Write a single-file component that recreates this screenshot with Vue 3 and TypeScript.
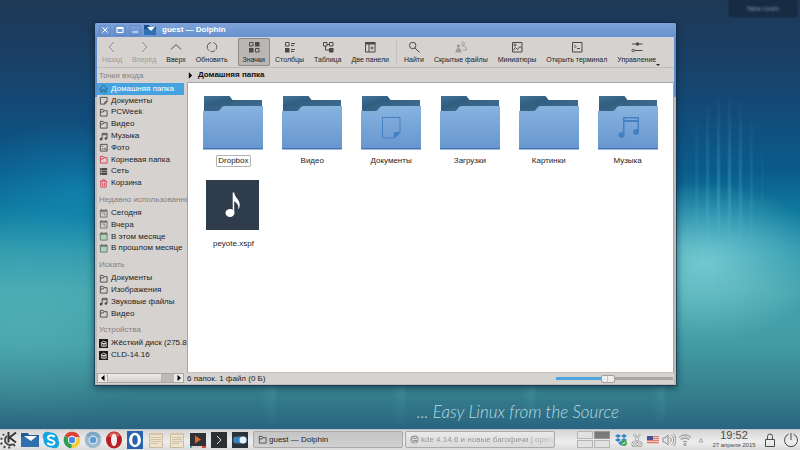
<script setup lang="ts">
import { ref } from 'vue'

interface Shape { d: string; f?: string; s?: string; w?: number; o?: number }

const ink = '#4a4a4a'
const line = (d: string, s = ink, w = 1): Shape => ({ d, s, w })
const fill = (d: string, f = ink, o = 1): Shape => ({ d, f, o })
const disc = (x: number, y: number, r: number) =>
  `M${x - r} ${y}a${r} ${r} 0 1 0 ${2 * r} 0a${r} ${r} 0 1 0 ${-2 * r} 0z`

/* Toolbar glyphs, 12 x 12 */
const tools: Record<string, Shape[]> = {
  back: [line('M8 1L3 6l5 5', '#8f8d8c')],
  forward: [line('M4 1l5 5-5 5', '#8f8d8c')],
  up: [line('M1 8.500l5-5 5 5')],
  reload: [line('M3 9.700A4.700 4.700 0 0 1 5 1.400M7.500 1.500A4.700 4.700 0 0 1 10 8.500M9 9.600A4.700 4.700 0 0 1 4.500 10.500', '#5c5c5c')],
  icons: [line('M1.500 1.500h3.500v3.500H1.500zM7.500 7.500H11V11H7.500z'), fill('M7 1h4.500v4.500H7zM1 7h4.500v4.500H1z')],
  columns: [line('M1.500 1.500h3.500v3.500H1.500zM7 2.500h4M7 4.500h3M7 8.500h4M7 10.500h3'), fill('M1 7h4.500v4.500H1z')],
  table: [line('M1.500 1.500h3.500v3.500H1.500zM7.500 1.500H11v3.500H7.500zM5 3.500h2.500M3.500 5v4H7'), fill('M7 7h4.500v4.500H7z')],
  split: [line('M1.500 2v9h9.500v-9zM5 3v8M6.500 7h3M8 5.500v3'), fill('M1 1h10.500v2.500H1z')],
  find: [line('M1.500 4.500a3.200 3.200 0 1 0 6.400 0a3.200 3.200 0 1 0-6.400 0M7 7l4.500 4.500')],
  hidden: [
    line('M6.500 2.500a1.500 1.500 0 1 1 3 0a1.500 1.500 0 1 1-3 0M7 5.500c2.500-1.500 4.500.5 4.500 3.500H8', '#a09d9b'),
    fill(disc(3.5, 5, 1.7) + 'M.5 11.500c0-6 6-6 6 0z', '#a09d9b'),
  ],
  preview: [line('M1.500 1.500h9.500V11H1.500zM2 9.500l2.500-3 2 2L9 5.500l2 2M3 4a1 1 0 1 0 2 0a1 1 0 1 0-2 0')],
  terminal: [line('M1.500 1.500h9.500V11H1.500zM3.500 4l1.500 1.500L3.500 7M6 7.500h3')],
  control: [line('M1 3h10.500M4 9.500h7.500M1 9.500a1.200 1.200 0 1 0 2.500 0a1.200 1.200 0 1 0-2.500 0'), fill(disc(6.5, 3, 1.8))],
}

/* Places glyphs, 10 x 10 */
const folder = (c = ink) => [line('M1.500 9V1.500h3l1 1.500h3.500v6zM1.500 4.500h3l1-1.500', c)]
const calendar = (c: string) => [
  fill('M1.500 3h7v6h-7z', c), line('M1.500 1.500h7.500V9H1.500zM3 0v2M7.500 0v2', '#70706e'), fill('M1 1h8v2H1z', '#70706e'),
]
const places: Record<string, Shape[]> = {
  home: [line('M.5 5.500L5 1l4.500 4.500M2 4.500V9h2V6.500h2V9h2V4.500', '#2b668b')],
  doc: [line('M1.500 1.500h7.500v5L6.500 9h-5zM9 6.500H6.500V9')],
  folder: folder(),
  root: folder('#dc3a55'),
  music: [line('M3.500 8V1.500H9V7M3.500 3H9'), fill(disc(2.3, 8, 1.5) + disc(7.7, 7.2, 1.5))],
  photo: [line('M1.500 1.500H9V9H1.500zM3 7.500l1.500-1.500 1 1 1.500-1 1.500 2M3 3.500h1.500')],
  net: [fill('M1 1h8v2.200H1zM1 3.900h8v2.200H1zM1 6.800h8V9H1z'), line('M2 2h1M2 5h1M2 8h1', '#bbb')],
  trash: [line('M1 2.500h8M3.500 2.500v-1.500h3v1.500M2 2.500V9h6V2.500M4 4.500v3M6 4.500v3', '#dc3a55')],
  day: [...calendar('#cfcdcb'), line('M3.500 4.500h3v3', '#8a8a88')],
  month: calendar('#a5d6b5'),
  disk: [fill('M0 0h10v10H0z', '#1d1d1d'), line('M2 4.500l3-2 3.500 1.500M3 5h5v3H3zM4.500 6.500h2', '#e8e8e8')],
}

const toolbar = [
  { icon: 'back', label: 'Назад', off: true }, { icon: 'forward', label: 'Вперёд', off: true },
  { icon: 'up', label: 'Вверх' }, { icon: 'reload', label: 'Обновить' },
  { icon: 'icons', label: 'Значки', sep: true, mode: true }, { icon: 'columns', label: 'Столбцы', mode: true },
  { icon: 'table', label: 'Таблица', mode: true }, { icon: 'split', label: 'Две панели' },
  { icon: 'find', label: 'Найти', sep: true }, { icon: 'hidden', label: 'Скрытые файлы' },
  { icon: 'preview', label: 'Миниатюры' }, { icon: 'terminal', label: 'Открыть терминал' },
  { icon: 'control', label: 'Управление', menu: true },
]
const mode = ref('icons')

const sections = [
  { title: 'Точки входа', items: [['home', 'Домашняя папка'], ['doc', 'Документы'], ['folder', 'PCWeek'], ['folder', 'Видео'], ['music', 'Музыка'], ['photo', 'Фото'], ['root', 'Корневая папка'], ['net', 'Сеть'], ['trash', 'Корзина']] },
  { title: 'Недавно использованны', items: [['day', 'Сегодня'], ['day', 'Вчера'], ['month', 'В этом месяце'], ['month', 'В прошлом месяце']] },
  { title: 'Искать', items: [['folder', 'Документы'], ['folder', 'Изображения'], ['music', 'Звуковые файлы'], ['folder', 'Видео']] },
  { title: 'Устройства', items: [['disk', 'Жёсткий диск (275.8'], ['disk', 'CLD-14.16']] },
]

const files = [
  { name: 'Dropbox', kind: 'plain', focus: true }, { name: 'Видео', kind: 'plain' }, { name: 'Документы', kind: 'doc' },
  { name: 'Загрузки', kind: 'plain' }, { name: 'Картинки', kind: 'plain' }, { name: 'Музыка', kind: 'music' },
  { name: 'peyote.xspf', kind: 'audio' },
]

/* Panel launchers, 18 x 18 */
const note = [
  fill('M2 2h14v15H2z', '#ede3cc'), line('M2.500 2.500h13v14h-13z', '#c9bb9d'),
  line('M4 6.500h10M4 8.500h10M4 10.500h10M4 12.500h7', '#cfc2a6'), fill('M2 2h14v2H2z', '#d3c6aa'),
]
const launchers: { name: string; shapes: Shape[] }[] = [
  { name: 'Меню', shapes: [
    line('M7 5a5 5 0 1 0 6 8M4 4.500L3 3M2.500 8L.5 7.500M2.500 12l-2 1M5 15l-1 2M9 15.500l.5 2M13 13l2 2', '#4a4c4e', 2),
    line('M8.500 1v10.500M16 1.500L9.500 6.500l6.500 5', '#35373a', 2)] },
  { name: 'Dolphin', shapes: [fill('M0 2h7l1 2h10v12H0z', '#235a92'), fill('M0 6h18v10H0z', '#2f6fae'), fill('M3 5h13l-6 5z', '#fff')] },
  { name: 'Skype', shapes: [
    fill(disc(9, 9, 7.5) + disc(5.5, 5.5, 4.8) + disc(12.5, 12.5, 4.8), '#13a6e3'),
    line('M12.500 6.200C11.500 3.800 6 4 6 6.700S12.500 8.800 12.500 11.600 6.500 14.200 5.500 11.600', '#fff', 2)] },
  { name: 'Chrome', shapes: [
    fill('M9 9L1.800 4.800A8.300 8.300 0 0 1 16.800 6.200H9z', '#dc4437'), fill('M9 9l7.800-2.800A8.300 8.300 0 0 1 8.500 17.300z', '#f7cb3a'),
    fill('M9 9l-.5 8.300A8.300 8.300 0 0 1 1.800 4.800z', '#2d9d57'), fill(disc(9, 9, 4.2), '#fff'), fill(disc(9, 9, 3.2), '#4788e8')] },
  { name: 'Chromium', shapes: [
    fill(disc(9, 9, 8.3), '#9bbad0'), fill('M9 9L1.800 4.800A8.300 8.300 0 0 1 16.800 6.200H9z', '#7fa6c2'),
    fill(disc(9, 9, 4.4), '#dcebf4'), fill(disc(9, 9, 3.2), '#5e9cc9')] },
  { name: 'Opera', shapes: [
    { d: 'M9 .5a8 8.500 0 1 0 0 17a8 8.500 0 1 0 0-17z', f: '#bd1c20' }, { d: 'M5 2.500C9 0 14 2 15 5C10 6 5 5 3 6z', f: '#dc5b56' },
    { d: 'M9 2.800a3 6.200 0 1 0 0 12.400a3 6.200 0 1 0 0-12.400z', f: '#f3eeee' }] },
  { name: 'Opera Developer', shapes: [
    fill('M1 0h16v18H1z', '#2a63ad'), { d: 'M9 1.800a6 7.200 0 1 0 0 14.400a6 7.200 0 1 0 0-14.400z', f: '#fff' },
    { d: 'M9 4.300a2.700 4.700 0 1 0 0 9.400a2.700 4.700 0 1 0 0-9.400z', f: '#2a63ad' }] },
  { name: 'Заметка', shapes: note },
  { name: 'Текст', shapes: note },
  { name: 'Плеер', shapes: [fill('M1 2h16v13H1z', '#303236'), fill('M6 4.500l6 4-6 4z', '#e2672f'), fill('M1 15h16v2H1z', '#d8d2cd'), fill('M1 15h2v2H1z', '#35a7b8'), fill('M13 15h4v2h-4z', '#d64a40')] },
  { name: 'Терминал', shapes: [fill('M1 1h16v16H1z', '#2d3033'), line('M7 5l4 4-4 4', '#dedede', 1)] },
  { name: 'Настройки', shapes: [fill('M1 1h16v16H1z', '#2b3238'), fill('M5.500 5.500h7a3.500 3.500 0 0 1 0 7h-7a3.500 3.500 0 0 1 0-7z', '#3a7fc0'), fill(disc(12, 9, 3.5), '#e6f1f8')] },
]

/* System tray glyphs, 14 x 14 */
const gray = '#8b8b8b'
const tray: { name: string; shapes: Shape[] }[] = [
  { name: 'Dropbox', shapes: [
    fill('M4 1l3 2-3 2-3-2zM10 1l3 2-3 2-3-2zM4 5l3 2-3 2-3-2zM10 5l3 2-3 2-3-2zM7 8l3 2-3 2.500L4 10z', '#2f87c5'), fill(disc(10, 10, 3), '#45a556'), line('M8.500 10l1 1 2-2', '#fff')] },
  { name: 'Буфер обмена', shapes: [
    line('M4 1l5 8M10 1L5 9M2.500 11a2 2 0 1 0 4 0a2 2 0 1 0-4 0M7.500 11a2 2 0 1 0 4 0a2 2 0 1 0-4 0', gray, 2),
    line('M4 1l5 8M10 1L5 9M2.500 11a2 2 0 1 0 4 0a2 2 0 1 0-4 0M7.500 11a2 2 0 1 0 4 0a2 2 0 1 0-4 0', '#eee', 1)] },
  { name: 'Раскладка клавиатуры', shapes: [
    fill('M1 3h12v8H1z', '#f0c4b8'), line('M1 3.500h12M1 5.500h12M1 7.500h12M1 9.500h12', '#dd7c70'), fill('M1 3h6v4H1z', '#4a4f96')] },
  { name: 'Громкость', shapes: [line('M1 5h2l3-3v10L3 9H1zM8 4.500c1.500 1.500 1.500 3.500 0 5M9.500 2.500c3 2.500 3 6.500 0 9M11.500 1c3.300 3.500 3.300 8.500 0 12', gray)] },
  { name: 'Сеть', shapes: [line('M1 4.500c3.500-3.500 8.500-3.500 12 0M3 7c2.500-2.500 5.500-2.500 8 0M5 9.200c1.300-1.200 2.700-1.200 4 0', gray), line(disc(7, 11.5, 1), gray), line('M2 6c3-3 7-3 10 0', '#bcbcbc')] },
  { name: 'Показать скрытые', shapes: [line('M5 9l2-3.500L9 9z', '#a5a5a5')] },
]
const zoom = ref(44)
</script>

<template>
  <div class="screen">
    <main class="desktop">
      <div class="rays"></div>
      <div class="glow"></div>
      <aside class="widget"><span>New room</span></aside>

      <section class="window">
        <header class="titlebar">
          <button class="wbtn" aria-label="Закрыть"><svg viewBox="0 0 12 12"><path d="M3.500 3.500l5 5M8.500 3.500l-5 5" /></svg></button>
          <button class="wbtn" aria-label="Развернуть"><svg viewBox="0 0 12 12"><path d="M3 3.500h6v5H3zM3 4.500h6" /></svg></button>
          <button class="wbtn" aria-label="Свернуть"><svg viewBox="0 0 12 12"><path d="M3.500 8h5.500" /></svg></button>
          <svg class="appicon" viewBox="0 0 12 12"><path d="M0 1h5l1 2h6v8H0z" fill="#174f8c" /><path d="M0 5h12v6H0z" fill="#2f70b3" /><path d="M3 3h8L7 7z" fill="#fff" /></svg>
          <h1>guest — Dolphin</h1>
        </header>

        <nav class="toolbar">
          <template v-for="t in toolbar" :key="t.icon">
            <span v-if="t.sep" class="sep" :class="{ line: !t.mode }"></span>
            <button class="tool" :class="{ on: t.mode && mode === t.icon, menu: t.menu }" :disabled="t.off" @click="t.mode && (mode = t.icon)">
              <svg viewBox="0 0 12 12" aria-hidden="true">
                <path v-for="(p, i) in tools[t.icon]" :key="i" :d="p.d" :fill="p.f ?? 'none'" :stroke="p.s ?? 'none'" :stroke-width="p.w" />
              </svg>
              <span>{{ t.label }}</span>
            </button>
          </template>
        </nav>

        <div class="body">
          <div class="side">
            <div class="places">
              <section v-for="s in sections" :key="s.title" class="group" :style="{ flexGrow: s.items.length }">
                <h2>{{ s.title }}</h2>
                <a v-for="[icon, name] in s.items" :key="name" href="#" :class="{ current: icon === 'home' }">
                  <svg viewBox="0 0 10 10" aria-hidden="true">
                    <path v-for="(p, i) in places[icon]" :key="i" :d="p.d" :fill="p.f ?? 'none'" :stroke="p.s ?? 'none'" :stroke-width="p.w" />
                  </svg>
                  <span>{{ name }}</span>
                </a>
              </section>
            </div>
            <div class="scroll">
              <button aria-label="Влево"><svg viewBox="0 0 8 8"><path d="M5.500 1v6L2 4z" /></svg></button>
              <div class="thumb"></div>
              <button aria-label="Вправо"><svg viewBox="0 0 8 8"><path d="M2.500 1v6L6 4z" /></svg></button>
            </div>
          </div>

          <div class="content">
            <div class="crumbs">
              <svg viewBox="0 0 6 8" aria-hidden="true"><path d="M1 0v8l4-4z" /></svg>
              <a href="#">Домашняя папка</a>
            </div>
            <ul class="files">
              <li v-for="f in files" :key="f.name">
                <svg v-if="f.kind !== 'audio'" class="pic" viewBox="0 0 60 56">
                  <defs>
                    <linearGradient id="front" x1="0" y1="0" x2="0" y2="1"><stop offset="0" stop-color="#87b3df" /><stop offset="1" stop-color="#6796cf" /></linearGradient>
                    <linearGradient id="rear" x1="0" y1="0" x2="1" y2="1"><stop offset="0" stop-color="#42749a" /><stop offset="0.300" stop-color="#315e80" /><stop offset="1" stop-color="#457399" /></linearGradient>
                  </defs>
                  <path d="M1 1h25.500l3 4H59v14H1z" fill="url(#rear)" />
                  <path d="M0 16h14.500q2 0 3-2l1-1.500q1-1.500 3-1.500H60v43H0z" fill="url(#front)" />
                  <path d="M0 53h60v1.500H0z" fill="#4477b8" />
                  <g v-if="f.kind === 'doc'"><path d="M21.500 22.500h17.500v15l-5.500 5.500h-12z" fill="none" stroke="#4480c2" /><path d="M39 37v1l-5 5h-1v-6z" fill="#4480c2" /></g>
                  <g v-if="f.kind === 'music'" fill="#4480c2"><path d="M25 22h16v15h-1.500V27h-13v13H25zM26.500 23.500v1.500h13v-1.500z" fill-rule="evenodd" /><circle cx="23.500" cy="40" r="3" /><circle cx="38" cy="37" r="3" /></g>
                </svg>
                <svg v-else class="pic" viewBox="0 0 60 56">
                  <path d="M3 2h53v50H3z" fill="#2f3c4c" />
                  <ellipse cx="27" cy="35" rx="4.500" ry="4" fill="#fff" />
                  <path d="M29.700 35V14.500h1.500c.5 5 5.500 7 5.500 12c0 2-.5 4-1.500 5c.8-4-1-6.500-4-8V35z" fill="#fff" />
                </svg>
                <span :class="{ focus: f.focus }">{{ f.name }}</span>
              </li>
            </ul>
            <footer class="status">
              <span>6 папок. 1 файл (0 Б)</span>
              <input v-model="zoom" type="range" min="0" max="100" aria-label="Размер значков" />
            </footer>
          </div>
        </div>
      </section>
      <p class="motto">... Easy Linux from the Source</p>
    </main>

    <footer class="panel">
      <div class="launch">
        <button v-for="l in launchers" :key="l.name" :aria-label="l.name">
          <svg viewBox="0 0 18 18"><path v-for="(p, i) in l.shapes" :key="i" :d="p.d" :fill="p.f ?? 'none'" :stroke="p.s ?? 'none'" :stroke-width="p.w" /></svg>
        </button>
      </div>
      <div class="tasks">
        <button class="task active">
          <svg viewBox="0 0 10 10"><path v-for="(p, i) in places.folder" :key="i" :d="p.d" fill="none" :stroke="p.s" /></svg>
          <span>guest — Dolphin</span>
        </button>
        <button class="task faded">
          <svg viewBox="0 0 10 10"><circle cx="5" cy="5" r="4.500" fill="#999" /><path d="M3 5h5a2.800 2.800 0 1 0-1 2.500" fill="none" stroke="#e4e4e4" /></svg>
          <span>kde 4.14.6 и новые багофичи | open</span>
        </button>
      </div>
      <div class="pager"><button aria-label="Стол 1"></button><button class="here" aria-label="Стол 2"></button><button aria-label="Стол 3"></button><button aria-label="Стол 4"></button></div>
      <div class="tray">
        <button v-for="t in tray" :key="t.name" :aria-label="t.name">
          <svg viewBox="0 0 14 14"><path v-for="(p, i) in t.shapes" :key="i" :d="p.d" :fill="p.f ?? 'none'" :stroke="p.s ?? 'none'" :stroke-width="p.w" /></svg>
        </button>
      </div>
      <div class="clock"><time>19:52</time><small>27 апреля 2015</small></div>
      <div class="session">
        <button aria-label="Заблокировать"><svg viewBox="0 0 16 16"><path d="M3.500 7.500h9v7h-9zM5.500 7.500V4.500a2.500 2.500 0 0 1 5 0v3" /></svg></button>
        <button aria-label="Выключить"><svg viewBox="0 0 16 16"><path d="M5.500 2.200a6.500 6.500 0 1 0 5 0M8 1v7" /></svg></button>
      </div>
    </footer>
  </div>
</template>

<style>
body { margin: 0; }
</style>

<style scoped>
* { box-sizing: border-box; }
.screen {
  display: flex; flex-direction: column; min-height: 100vh; overflow: hidden;
  font-family: "Liberation Sans", sans-serif; font-size: 8px; line-height: 10px; color: #232323;
}
button { font: inherit; color: inherit; border: 0; padding: 0; margin: 0; background: none; display: flex; align-items: center; justify-content: center; }
a { color: inherit; text-decoration: none; }
svg { display: block; flex: none; }
h1, h2, p, ul { margin: 0; padding: 0; font-size: inherit; }

.desktop {
  position: relative; flex: 1;
  background:
    radial-gradient(ellipse 120px 80px at 88% 61%, rgba(150, 225, 226, 0.650), transparent),
    radial-gradient(ellipse 150px 110px at 3% 74%, rgba(100, 200, 200, 0.350), transparent),
    radial-gradient(ellipse 110px 70px at 9% 45%, rgba(20, 150, 195, 0.450), transparent),
    linear-gradient(#1e3957 0%, #1a3f63 12%, #124c7b 27%, #0b5c8b 40%, #117c9f 50%, #2c96ac 58%, #43a2ad 68%, #429ca5 80%, #388390 90%, #296580 100%);
}
.rays, .glow { position: absolute; }
.rays {
  right: 30px; top: 90px; width: 90px; height: 200px;
  background: repeating-linear-gradient(90deg, transparent 0 3px, rgba(70, 200, 225, 0.350) 5px 6px, transparent 8px 11px);
  mask-image: radial-gradient(closest-side, #000, transparent);
}
.glow {
  left: 180px; right: 20px; bottom: 0; height: 100px;
  background: repeating-linear-gradient(90deg, transparent 0 80px, rgba(100, 210, 205, 0.180) 90px 93px, transparent 98px 130px);
  mask-image: linear-gradient(transparent, #000 50%, transparent);
}
.widget {
  position: absolute; top: 0; right: 3px; width: 68px; height: 17px; border-radius: 0 0 3px 3px;
  display: flex; align-items: center; justify-content: center;
  background: #172b42; color: #8197ac; box-shadow: 0 0 2px #14263a;
}
.widget span { filter: blur(1px); font-size: 7px; }
.motto {
  position: absolute; right: 181px; bottom: 6px; white-space: nowrap;
  font: italic 300 17px/22px Lato, "Liberation Sans", sans-serif; color: #b5dce1;
}

.window {
  position: absolute; top: 23px; left: 95px; right: 124px; bottom: 44px;
  display: flex; flex-direction: column; padding: 0 2px 1px;
  background: linear-gradient(#5f8ecf 0 74px, #bfbbba 74px);
  border-radius: 2px 2px 0 0;
  box-shadow: 0 0 0 1px rgba(20, 45, 70, 0.600), 0 2px 7px 1px rgba(8, 30, 50, 0.600);
}
.titlebar { display: flex; align-items: center; gap: 3px; height: 14px; padding-left: 4px; margin: 0 -2px; background: linear-gradient(#7ea3da, #6790cc); border-radius: 2px 2px 0 0; color: #fff; }
.wbtn { width: 12px; height: 11px; border: 1px solid rgba(70, 110, 175, 0.350); border-radius: 2px; }
.wbtn svg { width: 12px; height: 12px; fill: none; stroke: #fff; }
.appicon { width: 12px; height: 12px; margin-right: 3px; }
.titlebar h1 { font-weight: 700; font-size: 8px; }

.toolbar { display: flex; align-items: center; height: 31px; background: #d6d2d0; border-bottom: 1px solid #bfbbb9; }
.tool { flex-direction: column; gap: 3px; height: 28px; padding: 0 5px; border-radius: 2px; font-size: 7px; line-height: 8px; white-space: nowrap; position: relative; }
.tool svg { width: 12px; height: 12px; }
.tool:disabled { color: #a09c9a; }
.tool.on { background: #bab6b3; box-shadow: inset 0 0 0 1px #8e8a87; }
.tool.menu::after { content: ""; position: absolute; right: 1px; bottom: 0; border: 2px solid transparent; border-top-color: #222; border-bottom: 0; }
.sep { width: 5px; height: 24px; }
.sep.line { background: linear-gradient(#c4c0be, #c4c0be) 2px 0 / 1px 100% no-repeat; }

.body { flex: 1; display: flex; min-height: 0; background: #d6d2d0; }
.side { width: 87px; display: flex; flex-direction: column; }
.places { flex: 1; display: flex; flex-direction: column; padding-bottom: 12px; }
.group { display: flex; flex-direction: column; }
.group h2 { font-weight: 400; height: 14px; line-height: 14px; padding-left: 2px; color: #85817f; white-space: nowrap; margin-top: 4px; }
.group:first-child h2 { margin-top: 1px; }
.group a { flex: 1 1 11px; display: flex; align-items: center; gap: 3px; padding-left: 2px; white-space: nowrap; }
.group a svg { width: 9px; height: 9px; }
.group a.current { background: #47a3df; color: #fff; }
.scroll { display: flex; height: 10px; margin-bottom: 1px; background: #bdb9b6; border: 1px solid #aaa6a3; }
.scroll button { width: 9px; background: #ebe9e8; }
.scroll svg { width: 8px; height: 8px; }
.thumb { width: 55px; margin-right: auto; background: linear-gradient(#efedec, #d3cfcd); border: 1px solid #b5b1ae; border-width: 0 1px; }

.content { flex: 1; display: flex; flex-direction: column; padding-left: 3px; min-width: 0; }
.crumbs { display: flex; align-items: center; gap: 5px; height: 14px; padding-left: 1px; font-weight: 700; color: #111; }
.crumbs svg { width: 5px; height: 7px; }
.files {
  flex: 1; list-style: none; background: #fff; border: 1px solid #aaa6a4; border-bottom-color: #c4c0be;
  display: grid; grid-template-columns: repeat(6, 1fr); align-content: start; row-gap: 11px; padding: 12px 6px;
}
.files li { display: flex; flex-direction: column; align-items: center; gap: 4px; }
.pic { width: 60px; height: 56px; }
.files span { padding: 0 1px; border: 1px solid transparent; }
.files span.focus { border-color: #b3b3b3; border-radius: 1px; }
.status { display: flex; align-items: center; justify-content: space-between; height: 11px; }
.status input { appearance: none; width: 117px; height: 9px; margin: 0 1px 0 0; background: linear-gradient(90deg, #4ea5dc 45%, #aaa6a4 45%) 0 50% / 100% 3px no-repeat; }
.status input::-webkit-slider-thumb { appearance: none; width: 14px; height: 8px; border: 1px solid #a19d9a; border-radius: 2px; background: linear-gradient(90deg, #eee 40%, #c6c6c6 40% 50%, #eee 50%); }

.panel { display: flex; align-items: center; height: 21px; background: linear-gradient(#bfc3c5 0 1px, #d6d6d6 1px, #ededed 60%, #dcdcdc); }
.launch { display: flex; gap: 3px; width: 253px; }
.launch svg { width: 18px; height: 18px; }
.tasks { flex: 1; display: flex; gap: 2px; margin-right: 22px; min-width: 0; }
.task { flex: 1; min-width: 0; justify-content: flex-start; gap: 2px; height: 17px; padding: 0 4px; border: 1px solid #aaa; border-radius: 2px; background: linear-gradient(#e9e9e9, #dadada); white-space: nowrap; }
.task svg { width: 9px; height: 9px; }
.task.active { background: linear-gradient(#c5c5c5, #d1d1d1); }
.task.faded { color: #969696; }
.task.faded span { mask-image: linear-gradient(90deg, #000 80%, rgba(0, 0, 0, 0.300)); }
.pager { display: grid; grid-template-columns: 16px 16px; grid-auto-rows: 8px; gap: 1px; }
.pager button { border: 1px solid #b5b5b5; background: #e2e2e2; }
.pager .here { background: #77797b; border-color: #969696; }
.tray { display: flex; gap: 2px; margin-left: 4px; }
.tray svg { width: 14px; height: 14px; }
.clock { display: flex; flex-direction: column; align-items: center; width: 46px; margin-left: 3px; color: #4a4a4a; }
.clock time { font-size: 11px; line-height: 11px; }
.clock small { font-size: 6px; line-height: 8px; white-space: nowrap; }
.session { display: flex; gap: 5px; margin: 0 1px 0 5px; }
.session svg { width: 16px; height: 16px; fill: none; stroke: #4c4c4c; }
</style>
